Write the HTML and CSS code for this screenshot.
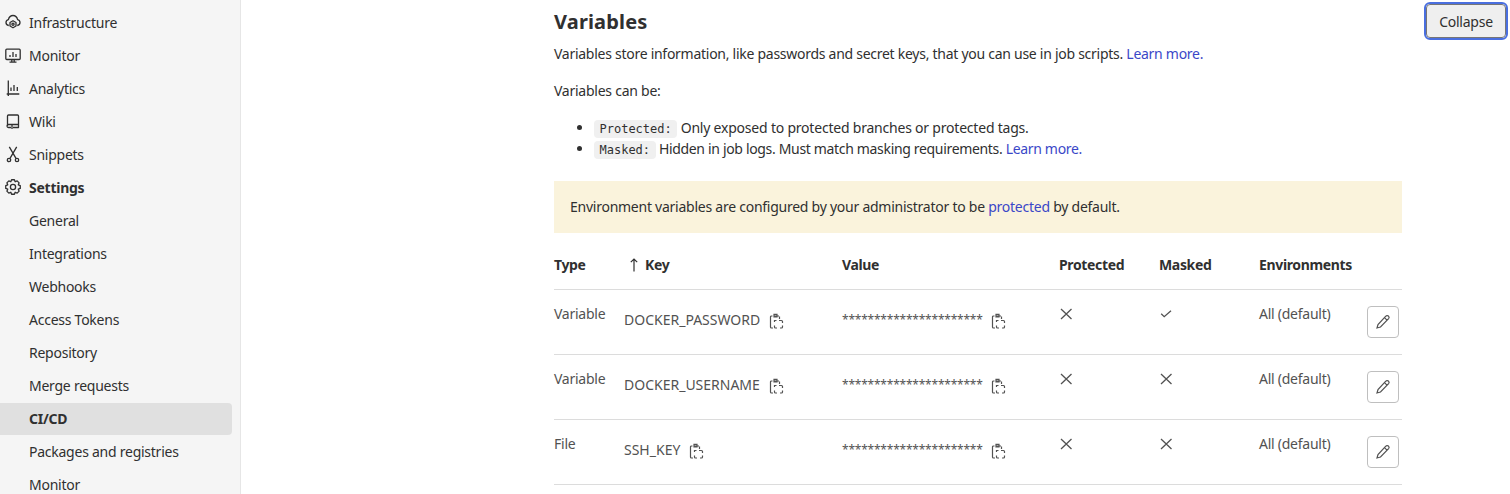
FILE: index.html
```html
<!DOCTYPE html>
<html lang="en">
<head>
<meta charset="utf-8">
<title>CI/CD Settings</title>
<link rel="stylesheet" href="styles.css">
</head>
<body>
<div class="layout">
  <aside class="sidebar">
    <nav>
      <a class="nav-item"><svg class="nav-icon" viewBox="0 0 16 16"><path d="M3.800 11.500C2 11.200 1 10 1 8.500 1 7 2 5.900 3.400 5.600 4 3.200 5.800 1.500 8 1.500s4 1.700 4.600 4.100C14 5.900 15 7 15 8.500c0 1.500-1 2.700-2.800 3"/><path d="M8 6.800l3 1.750v3.500l-3 1.750-3-1.750v-3.500z"/><circle cx="8" cy="10.300" r="1.100"/></svg>Infrastructure</a>
      <a class="nav-item"><svg class="nav-icon" viewBox="0 0 16 16"><rect x=".8" y="2.200" width="14.400" height="10.300" rx="1"/><path d="M6.800 12.500V15M9.200 12.500V15M4.500 15.200h7M5 10V8M8 10V5M11 10V7"/></svg>Monitor</a>
      <a class="nav-item"><svg class="nav-icon" viewBox="0 0 16 16"><path d="M3.300.5V16M1.700 14h12.600M6 11V7.500M9 11V5M12.300 11V7"/></svg>Analytics</a>
      <a class="nav-item"><svg class="nav-icon" viewBox="0 0 16 16"><path d="M2.500 13V3a1 1 0 0 1 1-1h9a1 1 0 0 1 1 1v8.500H3.500a1.200 1.200 0 0 0 0 3H6M13.500 11.500v3H8M7 11.500V16"/></svg>Wiki</a>
      <a class="nav-item"><svg class="nav-icon" viewBox="0 0 16 16"><path d="M4.300.8L11 12.300M11.700.8L5 12.300"/><circle cx="4" cy="14" r="1.700"/><circle cx="12" cy="14" r="1.700"/></svg>Snippets</a>
      <a class="nav-item nav-item-bold"><svg class="nav-icon" viewBox="0 0 16 16"><path d="M6.590.74h2.820l.77 1.990 1.960-.86 1.990 1.990-.86 1.960 1.990.77v2.820l-1.990.77.86 1.960-1.990 1.990-1.960-.86-.77 1.990H6.590l-.77-1.990-1.960.86-1.990-1.990.86-1.960-1.990-.77V6.590l1.990-.77-.86-1.960 1.990-1.990 1.960.86z"/><circle cx="8" cy="8" r="2.600"/></svg>Settings</a>
      <a class="nav-item">General</a>
      <a class="nav-item">Integrations</a>
      <a class="nav-item">Webhooks</a>
      <a class="nav-item">Access Tokens</a>
      <a class="nav-item">Repository</a>
      <a class="nav-item">Merge requests</a>
      <a class="nav-item nav-item-bold nav-item-active">CI/CD</a>
      <a class="nav-item">Packages and registries</a>
      <a class="nav-item">Monitor</a>
    </nav>
  </aside>
  <main class="main">
    <section class="panel">
      <h2 class="title">Variables</h2>
      <p class="lead">Variables store information, like passwords and secret keys, that you can use in job scripts. <a class="link">Learn more.</a></p>
      <p class="lead-two">Variables can be:</p>
      <ul class="list">
        <li><code class="code">Protected:</code> Only exposed to protected branches or protected tags.</li>
        <li><code class="code">Masked:</code> Hidden in job logs. Must match masking requirements. <a class="link">Learn more.</a></li>
      </ul>
      <div class="alert">Environment variables are configured by your administrator to be&nbsp;<a class="link">protected</a>&nbsp;by default.</div>
      <table class="vars">
        <colgroup>
          <col class="c-type"><col class="c-key"><col class="c-value"><col class="c-prot"><col class="c-mask"><col class="c-env"><col class="c-act">
        </colgroup>
        <thead>
          <tr><th>Type</th><th><svg class="arrow" viewBox="0 0 10 14"><path d="M5 13.500V1M1.800 4.200L5 1l3.200 3.200"/></svg>Key</th><th>Value</th><th>Protected</th><th>Masked</th><th>Environments</th><th></th></tr>
        </thead>
        <tbody>
          <tr>
            <td>Variable</td>
            <td><div class="cellrow">DOCKER_PASSWORD<svg class="copy" viewBox="0 0 16 16"><use href="#i-copy"/></svg></div></td>
            <td><div class="cellrow"><span class="stars">**********************</span><svg class="copy copy-value" viewBox="0 0 16 16"><use href="#i-copy"/></svg></div></td>
            <td><svg class="flag" viewBox="0 0 16 16"><use href="#i-x"/></svg></td>
            <td><svg class="flag" viewBox="0 0 16 16"><use href="#i-check"/></svg></td>
            <td>All (default)</td>
            <td class="act"><button class="edit" type="button"><svg class="pen" viewBox="0 0 16 16"><use href="#i-pen"/></svg></button></td>
          </tr>
          <tr>
            <td>Variable</td>
            <td><div class="cellrow">DOCKER_USERNAME<svg class="copy" viewBox="0 0 16 16"><use href="#i-copy"/></svg></div></td>
            <td><div class="cellrow"><span class="stars">**********************</span><svg class="copy copy-value" viewBox="0 0 16 16"><use href="#i-copy"/></svg></div></td>
            <td><svg class="flag" viewBox="0 0 16 16"><use href="#i-x"/></svg></td>
            <td><svg class="flag" viewBox="0 0 16 16"><use href="#i-x"/></svg></td>
            <td>All (default)</td>
            <td class="act"><button class="edit" type="button"><svg class="pen" viewBox="0 0 16 16"><use href="#i-pen"/></svg></button></td>
          </tr>
          <tr>
            <td>File</td>
            <td><div class="cellrow">SSH_KEY<svg class="copy" viewBox="0 0 16 16"><use href="#i-copy"/></svg></div></td>
            <td><div class="cellrow"><span class="stars">**********************</span><svg class="copy copy-value" viewBox="0 0 16 16"><use href="#i-copy"/></svg></div></td>
            <td><svg class="flag" viewBox="0 0 16 16"><use href="#i-x"/></svg></td>
            <td><svg class="flag" viewBox="0 0 16 16"><use href="#i-x"/></svg></td>
            <td>All (default)</td>
            <td class="act"><button class="edit" type="button"><svg class="pen" viewBox="0 0 16 16"><use href="#i-pen"/></svg></button></td>
          </tr>
        </tbody>
      </table>
    </section>
    <button class="collapse" type="button">Collapse</button>
  </main>
</div>
<svg class="defs" aria-hidden="true">
  <symbol id="i-copy" viewBox="0 0 16 16"><path d="M3.500 3H2.500a1 1 0 0 0-1 1v10a1 1 0 0 0 1 1H4M5 3h5M10.500 3.500v2.500M5 1.300h3v2.700H5z"/><path d="M5.500 9V7.500h2M10 7.500h2.500a1 1 0 0 1 1 1V10M13.500 12.500v1.500a1 1 0 0 1-1 1H11M8 15H6.500a1 1 0 0 1-1-1v-1.500"/></symbol>
  <symbol id="i-x" viewBox="0 0 16 16"><path d="M2 3l10.500 10M12.500 3L2 13"/></symbol>
  <symbol id="i-check" viewBox="0 0 16 16"><path d="M2.200 7.800l3 2.900L12 4.700"/></symbol>
  <symbol id="i-pen" viewBox="0 0 16 16"><path d="M10.800 2.200a1.800 1.800 0 0 1 2.800 2.400L5.500 13l-3.500 1 1-3.500zM9.500 3.700l2.700 2.700"/></symbol>
</svg>
</body>
</html>
```
FILE: styles.css
```css
* { box-sizing: border-box; }
html, body { margin: 0; height: 100%; overflow: hidden; background: #fff; }
body { font-family: "Noto Sans", sans-serif; font-size: 14px; letter-spacing: -0.25px; color: #303030; }
.layout { display: flex; height: 494px; overflow: hidden; }
.defs { display: none; }

.sidebar { width: 241px; flex: none; background: #f5f5f5; border-right: 1px solid #e6e6e6; padding: 6px 8px 0 0; }
.nav-item { display: flex; align-items: center; height: 33px; padding-left: 29px; color: #303030; position: relative; }
.nav-item-bold { font-weight: 700; }
.nav-item-active { height: 32px; margin-top: 1px; padding-bottom: 1px; background: #e0e0e0; border-radius: 0 4px 4px 0; }
.nav-icon { position: absolute; left: 5px; top: 8px; width: 16px; height: 16px; fill: none; stroke: #303030; stroke-width: 1.300; stroke-linejoin: round; overflow: visible; }

.main { display: flex; align-items: flex-start; padding-left: 313px; flex: 1; min-width: 0; }
.panel { width: 848px; flex: none; padding-top: 10px; }
.title { margin: 0 0 10px; font-size: 20px; line-height: 24px; font-weight: 700; letter-spacing: 0.15px; }
.lead { margin: 0 0 17px; line-height: 20px; letter-spacing: -0.27px; }
.lead-two { margin: 0 0 17px; line-height: 20px; }
.link { color: #3a47c8; }
.list { margin: 0 0 21px; padding-left: 40px; }
.list li { height: 21px; line-height: 20px; letter-spacing: -0.21px; }
.list li:last-child { letter-spacing: -0.33px; }
.code { font-family: "DejaVu Sans Mono", monospace; font-size: 12px; line-height: 1; letter-spacing: 0; background: #f0f0f0; border-radius: 4px; padding: 2px 5.500px; }
.alert { display: flex; align-items: center; height: 52px; padding: 0 16px 2px; background: #faf3dc; }

.vars { width: 848px; border-collapse: collapse; table-layout: fixed; }
.c-type { width: 70px; } .c-key { width: 218px; } .c-value { width: 217px; } .c-prot { width: 100px; } .c-mask { width: 100px; } .c-env { width: 108px; } .c-act { width: 35px; }
.vars th { height: 56px; text-align: left; font-weight: 700; letter-spacing: -0.35px; padding: 8px 0 0; border-bottom: 1px solid #dcdcdc; }
.vars td { height: 65px; vertical-align: top; padding: 14px 0 0; border-bottom: 1px solid #dcdcdc; color: #525252; }
.arrow { width: 10px; height: 14px; margin: 0 6px 0 5px; vertical-align: -2px; fill: none; stroke: #303030; stroke-width: 1.200; }
.cellrow { display: flex; align-items: center; height: 32px; letter-spacing: 0; }
.stars { font-size: 12px; letter-spacing: -0.22px; }
.copy { width: 16px; height: 16px; margin: 3px 0 0 9px; fill: none; stroke: #525252; stroke-width: 1.200; }
.copy-value { margin-left: 8px; }
.flag { display: block; width: 16px; height: 16px; margin-top: 2px; fill: none; stroke: #525252; stroke-width: 1.300; }
.edit { display: flex; align-items: center; justify-content: center; width: 32px; height: 32px; padding: 0; margin-top: 2px; background: #fff; border: 1px solid #bfbfbf; border-radius: 4px; }
.pen { width: 16px; height: 16px; fill: none; stroke: #525252; stroke-width: 1.200; }

.collapse { flex: none; width: 80px; height: 34px; margin: 4px 0 0 24px; padding: 0; font: inherit; letter-spacing: inherit; color: #303030; background: #efefef; border: 1px solid #767676; border-radius: 4px; outline: 2px solid #4a6fdf; outline-offset: 0; }
```
